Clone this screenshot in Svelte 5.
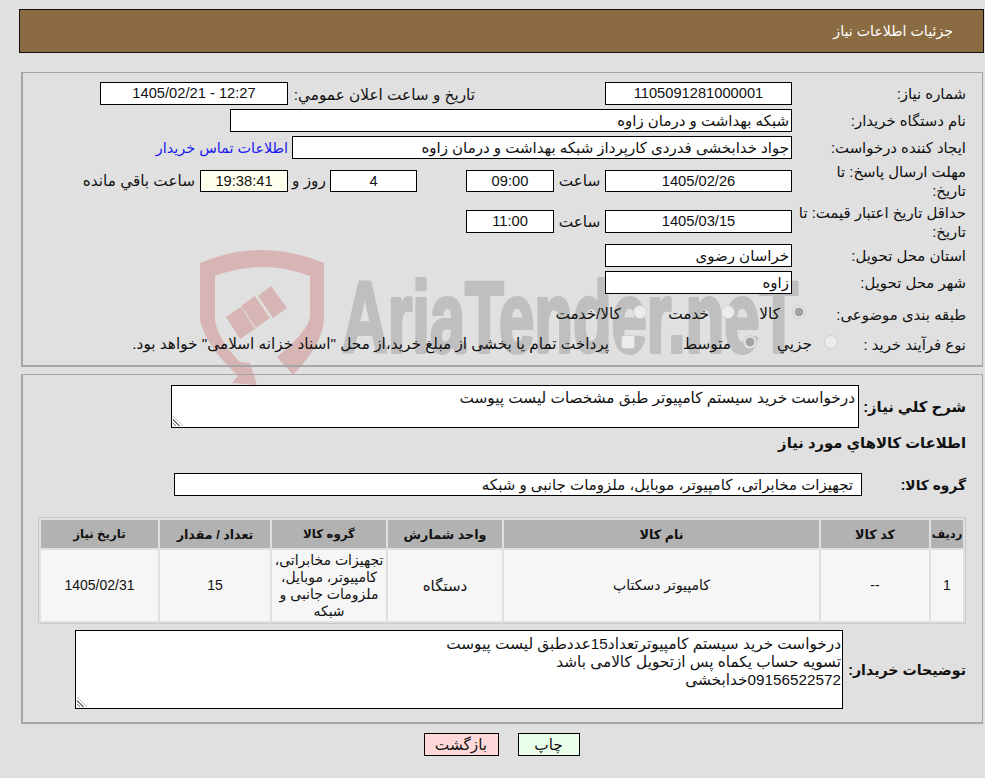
<script>
  const rows = [
    { no: '1', code: '--', name: 'کامپیوتر دسکتاپ', unit: 'دستگاه', group: 'تجهیزات مخابراتی، کامپیوتر، موبایل، ملزومات جانبی و شبکه', qty: '15', date: '1405/02/31' }
  ];
</script>

<div class="page" dir="rtl">
  <svg class="mark" viewBox="0 0 985 778" aria-hidden="true">
    <path d="M200 263 Q262 237 324 263 L324 320 Q322 345 293 375 L277 357 Q310 330 310 315 L310 276 Q262 258 215 276 L215 320 Q218 340 240 362 L250 363 L257 385 L232 383 L238 376 Q205 345 200 320 Z" fill="#d8b5b5"/>
    <path d="M226 317 L241 307 L255 329 L240 339 Z M241 306 L255 296 L270 318 L256 328 Z M258 296 L271 286 L287 308 L273 318 Z" fill="#d8b5b5"/>
    <text x="342" y="352" class="marktext" textLength="456" lengthAdjust="spacingAndGlyphs">AriaTender.neT</text>
  </svg>

  <header class="title">جزئیات اطلاعات نیاز</header>

  <section class="panel top">
    <div class="row r1">
      <span class="label">شماره نیاز:</span>
      <span class="box mid center">1105091281000001</span>
      <span class="pub">تاریخ و ساعت اعلان عمومي:</span>
      <span class="box pubbox center">12:27 - 1405/02/21</span>
    </div>
    <div class="row r1">
      <span class="label">نام دستگاه خریدار:</span>
      <span class="box buyer">شبکه بهداشت و درمان زاوه</span>
    </div>
    <div class="row r1">
      <span class="label">ایجاد کننده درخواست:</span>
      <span class="box creator">جواد خدابخشی فدردی کارپرداز شبکه بهداشت و درمان زاوه</span>
      <span class="contact">اطلاعات تماس خریدار</span>
    </div>
    <div class="row r4">
      <span class="label wrap">مهلت ارسال پاسخ: تا تاریخ:</span>
      <span class="box mid center">1405/02/26</span>
      <span class="time-label">ساعت</span>
      <span class="box time center">09:00</span>
      <span class="box days center">4</span>
      <span class="roz">روز و</span>
      <span class="box clock center">19:38:41</span>
      <span class="remain">ساعت باقي مانده</span>
    </div>
    <div class="row r5">
      <span class="label">حداقل تاریخ اعتبار قیمت: تا تاریخ:</span>
      <span class="box mid center">1405/03/15</span>
      <span class="time-label">ساعت</span>
      <span class="box time center">11:00</span>
    </div>
    <div class="row r6">
      <span class="label">استان محل تحویل:</span>
      <span class="box mid">خراسان رضوی</span>
    </div>
    <div class="row r1">
      <span class="label">شهر محل تحویل:</span>
      <span class="box mid">زاوه</span>
    </div>
    <div class="row r8">
      <span class="label cat-label">طبقه بندی موضوعی:</span>
      <span class="choice w71"><i class="radio on"></i><span>کالا</span></span>
      <span class="choice w88"><i class="radio"></i><span>خدمت</span></span>
      <span class="choice"><i class="radio"></i><span>کالا/خدمت</span></span>
    </div>
    <div class="row r9">
      <span class="label proc-label">نوع فرآیند خرید :</span>
      <span class="choice w81"><i class="radio"></i><span>جزیي</span></span>
      <span class="choice w122"><i class="radio on"></i><span>متوسط</span></span>
      <span class="choice"><i class="radio square"></i><span>پرداخت تمام یا بخشی از مبلغ خرید،از محل "اسناد خزانه اسلامی" خواهد بود.</span></span>
    </div>
  </section>

  <section class="panel bottom">
    <div class="row sharh">
      <span class="label strong s1">شرح کلي نیاز:</span>
      <div class="box area a1">درخواست خرید سیستم کامپیوتر طبق مشخصات لیست پیوست<i class="grip"></i></div>
    </div>
    <div class="heading">اطلاعات کالاهاي مورد نیاز</div>
    <div class="row group">
      <span class="label strong s2">گروه کالا:</span>
      <span class="box groupbox">تجهیزات مخابراتی، کامپیوتر، موبایل، ملزومات جانبی و شبکه</span>
    </div>
    <table>
      <thead>
        <tr>
          <th class="c1">ردیف</th><th class="c2">کد کالا</th><th class="c3">نام کالا</th><th class="c4">واحد شمارش</th><th class="c5">گروه کالا</th><th class="c6">تعداد / مقدار</th><th class="c7">تاریخ نیاز</th>
        </tr>
      </thead>
      <tbody>
        {#each rows as r}
          <tr>
            <td>{r.no}</td><td>{r.code}</td><td>{r.name}</td><td class="unit">{r.unit}</td><td>{r.group}</td><td>{r.qty}</td><td>{r.date}</td>
          </tr>
        {/each}
      </tbody>
    </table>
    <div class="row notes">
      <span class="label strong s3">توضیحات خریدار:</span>
      <div class="box area a2">درخواست خرید سیستم کامپیوترتعداد15عددطبق لیست پیوست<br />تسویه حساب یکماه پس ازتحویل کالامی باشد<br />09156522572خدابخشی<i class="grip"></i></div>
    </div>
  </section>

  <div class="actions">
    <button class="print">چاپ</button>
    <button class="back">بازگشت</button>
  </div>
</div>

<style>
  :global(body) {
    margin: 0;
    background: #e0e0e0;
  }
  .page {
    position: relative;
    width: 985px;
    height: 778px;
    overflow: hidden;
    box-sizing: border-box;
    padding: 9px 1px 0 19px;
    font-family: "Liberation Sans", "DejaVu Sans", sans-serif;
    font-size: 15.3px;
    color: #111;
  }
  .mark {
    position: absolute;
    left: 0;
    top: 0;
    width: 985px;
    height: 778px;
  }
  .marktext {
    direction: ltr;
    font-family: "Liberation Sans", sans-serif;
    font-weight: 700;
    font-size: 100px;
    fill: #bfbfbf;
    stroke: #bfbfbf;
    stroke-width: 4px;
    stroke-linejoin: round;
  }
  .title {
    position: relative;
    height: 42px;
    line-height: 42px;
    border: 1px solid #111;
    background: #8b6b42;
    color: #fff;
    padding-right: 30px;
    font-size: 14.2px;
  }
  .panel {
    position: relative;
    box-sizing: border-box;
    margin: 19px 1px 0 2px;
    border: 1px solid #a6a6a6;
    border-width: 1px 1px 2px 2px;
  }
  .top {
    height: 295px;
    padding: 9px 16px 0 0;
  }
  .bottom {
    margin-top: 7px;
    height: 350px;
    padding: 10px 16px 0 15px;
  }
  .row {
    display: flex;
    align-items: center;
  }
  .r1 { height: 23px; margin-bottom: 4px; }
  .r4 { height: 22px; margin-top: 11px; }
  .r4 .box { height: 22px; line-height: 20px; }
  .r5 { height: 23px; margin-top: 18px; }
  .r6 { height: 23px; margin-top: 11px; margin-bottom: 4px; }
  .r8 { height: 22px; margin-top: 9px; }
  .r9 { height: 22px; margin-top: 8px; }
  .label {
    flex: none;
    box-sizing: border-box;
    width: 174px;
    line-height: 19px;
    font-size: 14.9px;
    padding-left: 6px;
    position: relative;
    top: 1px;
  }
  .label.wrap { padding-left: 24px; }
  .cat-label { width: 160px; padding: 0; }
  .proc-label { width: 128px; padding: 0; }
  .box {
    flex: none;
    box-sizing: border-box;
    height: 23px;
    line-height: 21px;
    border: 1px solid #000;
    background: #fff;
    padding: 0 2px;
    white-space: nowrap;
    overflow: hidden;
    font-size: 15px;
  }
  .box.center { text-align: center; font-size: 14.7px; }
  .mid { width: 187px; }
  .pub {
    flex: none;
    box-sizing: border-box;
    width: 317px;
    padding: 2px 130px 0 0;
    white-space: nowrap;
    font-size: 15.3px;
  }
  .pubbox { width: 188px; }
  .buyer { width: 562px; }
  .creator { width: 500px; }
  .contact { color: #1a1aee; margin-right: 4px; white-space: nowrap; font-size: 14.4px; }
  .time-label { width: 51px; text-align: center; flex: none; }
  .time { width: 88px; }
  .days { width: 87px; margin-right: 49px; }
  .roz { width: 42px; text-align: center; flex: none; }
  .clock { width: 88px; background: #ffffee; }
  .remain { margin-right: 5px; white-space: nowrap; }
  .choice {
    flex: none;
    display: flex;
    align-items: center;
    gap: 12px;
    white-space: nowrap;
  }
  .w71 { width: 71px; }
  .w88 { width: 88px; }
  .w81 { width: 81px; }
  .w122 { width: 122px; }
  .radio {
    flex: none;
    box-sizing: border-box;
    width: 14px;
    height: 14px;
    border-radius: 50%;
    background: #ececec;
    border: 1px solid #d0d0d0;
    margin-top: -4px;
  }
  .radio.on { box-shadow: inset 0 0 0 1.5px #f0f0f0, inset 0 0 0 6px #a3a3a3; }
  .radio.square { border-radius: 3px; }
  .sharh { height: 43px; }
  .strong { font-weight: 700; font-size: 14.5px; padding: 0; top: 1px; }
  .s1 { width: 107px; font-size: 14.8px; }
  .s2 { width: 104px; font-size: 13.8px; }
  .s3 { width: 123px; font-size: 14.2px; }
  .area {
    position: relative;
    white-space: normal;
    line-height: 18px;
    font-size: 15.3px;
  }
  .a1 { width: 688px; height: 43px; padding: 3px; }
  .a2 { width: 768px; height: 79px; padding: 4px 1px; }
  .grip {
    position: absolute;
    left: 1px;
    bottom: 1px;
    width: 10px;
    height: 10px;
    background: repeating-linear-gradient(45deg, transparent 0 1.5px, #777 1.5px 2.5px);
    clip-path: polygon(0 0, 100% 100%, 0 100%);
  }
  .heading { font-weight: 700; font-size: 14.8px; margin-top: 5px; height: 20px; line-height: 20px; }
  .group { margin-top: 20px; height: 23px; }
  .groupbox { width: 688px; padding-right: 8px; }
  table {
    margin-top: 21px;
    width: 928px;
    border: 1px solid #c8c8c8;
    border-spacing: 2px;
    table-layout: fixed;
  }
  th {
    background: #b2b2b2;
    height: 28px;
    font-size: 12.7px;
    padding: 0;
    font-weight: 700;
  }
  th.c1 { font-size: 11.5px; }
  th.c5, th.c7 { font-size: 11.8px; }
  td {
    background: #f6f6f6;
    text-align: center;
    padding: 0;
    height: 71px;
    line-height: 17px;
    font-size: 14px;
  }
  td.unit { font-size: 15px; }
  .c1 { width: 32px; }
  .c2 { width: 108px; }
  .c3 { width: 315px; }
  .c4 { width: 114px; }
  .c5 { width: 114px; }
  .c6 { width: 110px; }
  .c7 { width: 117px; }
  .notes { margin-top: 6px; height: 79px; }
  .actions {
    position: relative;
    display: flex;
    justify-content: center;
    gap: 19px;
    margin-top: 9px;
  }
  button {
    box-sizing: border-box;
    height: 23px;
    border: 1px solid #000;
    font: inherit;
    color: #111;
    padding: 0;
  }
  .print { width: 62px; background: #eaffea; }
  .back { width: 75px; background: #ffd9d9; }
</style>
